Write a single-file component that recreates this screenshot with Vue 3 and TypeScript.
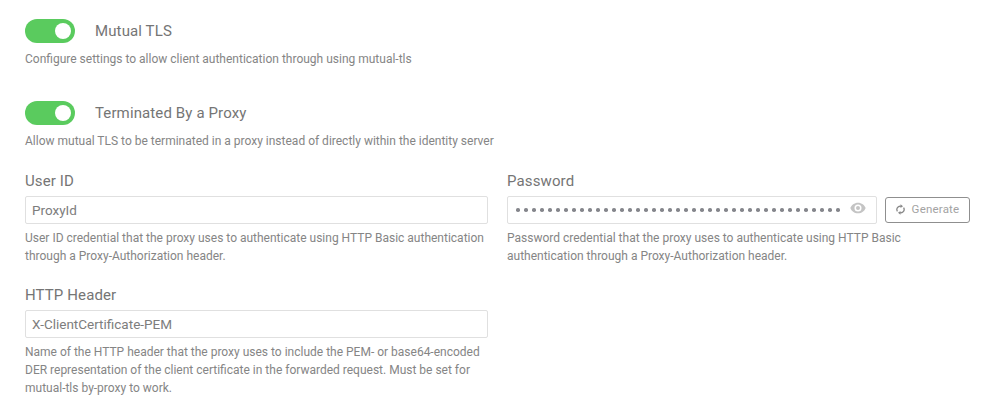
<script setup lang="ts">
const dots = Array.from({ length: 41 }, (_, i) => i)
</script>

<template>
  <div class="page">
    <section class="switch-block first">
      <div class="switch-row">
        <span class="toggle"><span class="knob"></span></span>
        <span class="switch-title">Mutual TLS</span>
      </div>
      <p class="help">Configure settings to allow client authentication through using mutual-tls</p>
    </section>
    <section class="switch-block second">
      <div class="switch-row">
        <span class="toggle"><span class="knob"></span></span>
        <span class="switch-title">Terminated By a Proxy</span>
      </div>
      <p class="help">Allow mutual TLS to be terminated in a proxy instead of directly within the identity server</p>
    </section>
    <div class="grid">
      <div class="field">
        <label class="label">User ID</label>
        <div class="input">ProxyId</div>
        <p class="help wrap">User ID credential that the proxy uses to authenticate using HTTP Basic authentication through a Proxy-Authorization header.</p>
      </div>
      <div class="field">
        <label class="label">Password</label>
        <div class="pw-row">
          <div class="input pw">
            <span class="dots"><i v-for="d in dots" :key="d" class="dot"></i></span>
            <svg class="eye" width="16" height="12" viewBox="0 0 24 18" aria-hidden="true">
              <path fill="#c4c4c4" fill-rule="evenodd" d="M12 1C6.500 1 2.200 4.400 0.500 9c1.700 4.600 6 8 11.500 8s9.800-3.400 11.500-8C21.800 4.400 17.500 1 12 1zm0 13.300a5.300 5.300 0 1 1 0-10.600 5.300 5.300 0 0 1 0 10.600zM12 6a3 3 0 1 0 0 6 3 3 0 0 0 0-6z"/>
            </svg>
          </div>
          <button class="gen" type="button">
            <svg width="9" height="11" viewBox="0 0 10 12" aria-hidden="true">
              <path fill="none" stroke="#8a8a8a" stroke-width="1.500" d="M1.600 8A3.600 3.600 0 0 1 5.500 2.500M8.400 4A3.600 3.600 0 0 1 4.500 9.500"/>
              <path fill="#8a8a8a" d="M5 .2 7.800 2.400 5 4.400zM5 7.600 2.200 9.600 5 11.800z"/>
            </svg>
            <span>Generate</span>
          </button>
        </div>
        <p class="help wrap">Password credential that the proxy uses to authenticate using HTTP Basic authentication through a Proxy-Authorization header.</p>
      </div>
      <div class="field third">
        <label class="label">HTTP Header</label>
        <div class="input">X-ClientCertificate-PEM</div>
        <p class="help wrap">Name of the HTTP header that the proxy uses to include the PEM- or base64-encoded DER representation of the client certificate in the forwarded request. Must be set for mutual-tls by-proxy to work.</p>
      </div>
    </div>
  </div>
</template>

<style scoped>
.page {
  box-sizing: border-box;
  width: 993px;
  height: 418px;
  padding: 19px 23px 0 25px;
  background: #fff;
  font-family: Roboto, sans-serif;
  color: #707070;
  overflow: hidden;
}
.second { margin-top: 33px; }
.switch-row { display: flex; align-items: center; height: 24px; }
.toggle {
  display: flex;
  justify-content: flex-end;
  align-items: center;
  box-sizing: border-box;
  width: 50px;
  height: 24px;
  padding-right: 4px;
  border-radius: 12px;
  background: #5acb5e;
}
.knob { width: 16px; height: 16px; border-radius: 50%; background: #fff; }
.switch-title { margin-left: 20px; font-size: 15px; letter-spacing: .12px; color: #757575; }
.help { margin: 0; font-size: 12px; line-height: 18px; color: #858585; }
.switch-block .help { margin-top: 7px; }
.grid {
  display: grid;
  grid-template-columns: 463px 463px;
  column-gap: 19px;
  margin-top: 21px;
}
.field { min-width: 0; }
.third { margin-top: 20px; }
.label { display: block; font-size: 15px; line-height: 20px; letter-spacing: .12px; color: #757575; }
.input {
  box-sizing: border-box;
  height: 28px;
  margin-top: 5px;
  padding: 0 6px;
  border: 1px solid #e0e0e0;
  border-radius: 2px;
  font-size: 13.500px;
  line-height: 26px;
  color: #7d7d7d;
}
.wrap { margin-top: 5px; }
.pw-row { display: flex; gap: 8px; align-items: center; margin-top: 5px; }
.pw { flex: 1; display: flex; align-items: center; justify-content: space-between; margin-top: 0; padding: 0 10px 0 8px; }
.dots { display: flex; gap: 4.500px; }
.dot { display: block; width: 3.500px; height: 3.500px; border-radius: 50%; background: #85868c; }
.eye { display: block; margin-bottom: 4px; }
.gen {
  display: flex;
  align-items: center;
  justify-content: center;
  gap: 7px;
  box-sizing: border-box;
  width: 85px;
  height: 26px;
  padding: 0 0 2px;
  border: 1px solid #8f8f8f;
  border-radius: 3px;
  background: #fff;
  font-family: inherit;
  font-size: 11.500px;
  letter-spacing: .2px;
  color: #a3a3a3;
}
</style>
